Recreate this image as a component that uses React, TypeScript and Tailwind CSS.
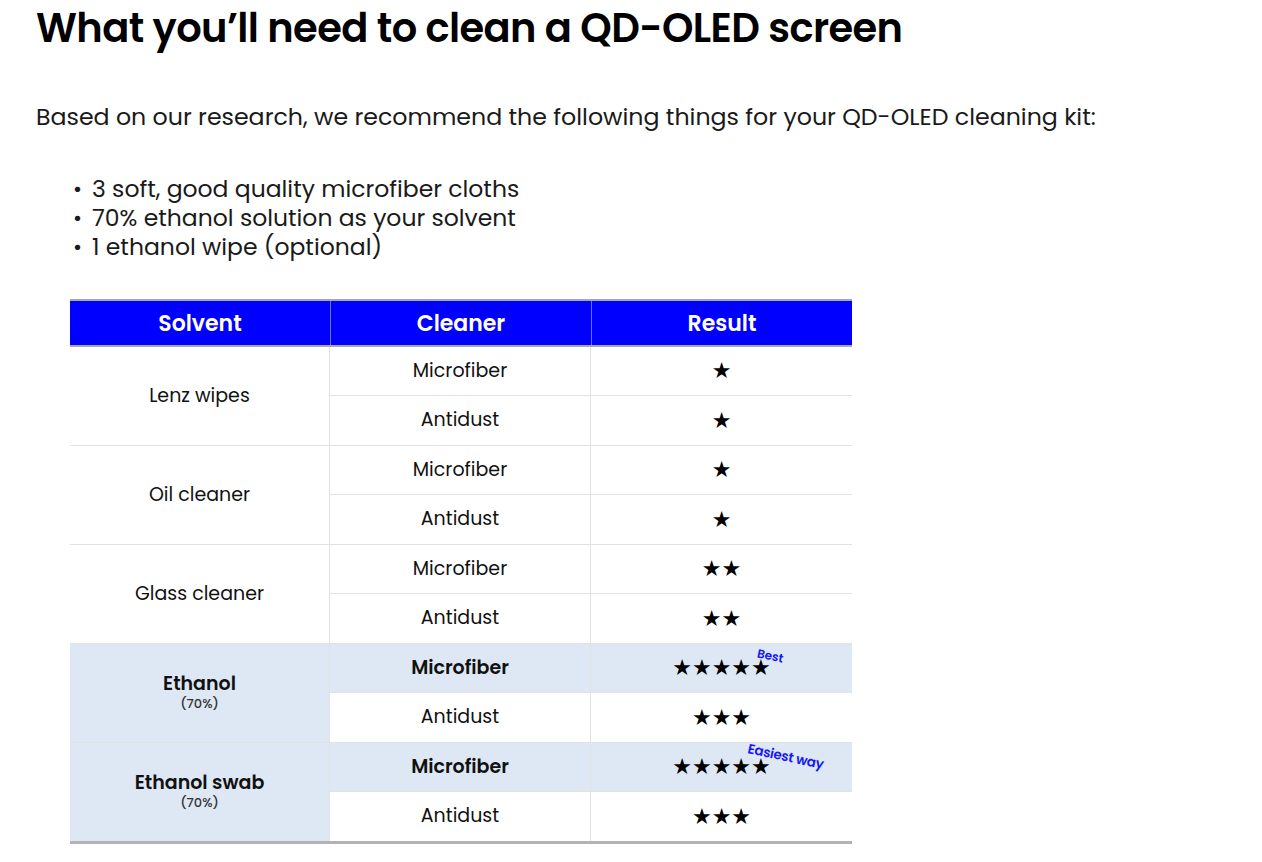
const rows = [
  { solvent: "Lenz wipes", sub: "", hl: false, items: [{ cleaner: "Microfiber", stars: "★", note: "" }, { cleaner: "Antidust", stars: "★", note: "" }] },
  { solvent: "Oil cleaner", sub: "", hl: false, items: [{ cleaner: "Microfiber", stars: "★", note: "" }, { cleaner: "Antidust", stars: "★", note: "" }] },
  { solvent: "Glass cleaner", sub: "", hl: false, items: [{ cleaner: "Microfiber", stars: "★★", note: "" }, { cleaner: "Antidust", stars: "★★", note: "" }] },
  { solvent: "Ethanol", sub: "(70%)", hl: true, items: [{ cleaner: "Microfiber", stars: "★★★★★", note: "Best" }, { cleaner: "Antidust", stars: "★★★", note: "" }] },
  { solvent: "Ethanol swab", sub: "(70%)", hl: true, items: [{ cleaner: "Microfiber", stars: "★★★★★", note: "Easiest way" }, { cleaner: "Antidust", stars: "★★★", note: "" }] },
];

const items = ["3 soft, good quality microfiber cloths", "70% ethanol solution as your solvent", "1 ethanol wipe (optional)"];

export default function App() {
  return (
    <div className="min-h-screen bg-white pl-[36px] text-[#111] font-['Poppins','Lato','Noto_Sans',sans-serif]">
      <h1 className="pt-[2px] text-[40px] font-semibold leading-[52px] tracking-[-0.6px] text-black">
        What you’ll need to clean a QD-OLED screen
      </h1>
      <p className="mt-[48px] text-[23.7px] leading-[30px] text-[#1a1a1a]">
        Based on our research, we recommend the following things for your QD-OLED cleaning kit:
      </p>
      <ul className="mt-[42px] pl-[36px] text-[23.5px] leading-[29px] text-[#1a1a1a]">
        {items.map((t) => (
          <li key={t} className="flex items-center">
            <span className="w-[20px] pl-[1px] text-[18px] font-bold">•</span>
            <span>{t}</span>
          </li>
        ))}
      </ul>

      <div className="mt-[38px] ml-[34px] w-[782px]">
        <div className="grid grid-cols-[260px_261px_261px] border-t-2 border-b-2 border-[#a8a8a8] bg-[#0000ff] text-[22px] font-semibold text-white">
          <div className="flex h-[44px] items-center justify-center">Solvent</div>
          <div className="flex h-[44px] items-center justify-center border-l border-[#6f6fff]">Cleaner</div>
          <div className="flex h-[44px] items-center justify-center border-l border-[#6f6fff]">Result</div>
        </div>
        <div className="border-b-[3px] border-[#b3b3b3]">
          {rows.map((g, gi) => (
            <div
              key={g.solvent}
              className={`grid grid-cols-[260px_522px] ${gi < rows.length - 1 ? "border-b border-[#e2e2e2]" : ""}`}
            >
              <div className={`flex flex-col items-center justify-center border-r border-[#e2e2e2] ${g.hl ? "bg-[#dde8f4] font-semibold" : ""}`}>
                <span className="text-[19px] leading-[22px]">{g.solvent}</span>
                {g.sub && <span className="text-[13px] leading-[18px] font-medium text-[#333]">{g.sub}</span>}
              </div>
              <div>
                {g.items.map((it, i) => {
                  const shade = g.hl && i === 0;
                  return (
                    <div
                      key={it.cleaner}
                      className={`grid h-[49px] grid-cols-[261px_261px] ${i === 0 ? "border-b border-[#e2e2e2]" : ""} ${shade ? "bg-[#dde8f4] font-semibold" : ""}`}
                    >
                      <div className="flex items-center justify-center border-r border-[#e2e2e2] text-[19px]">{it.cleaner}</div>
                      <div className="relative flex items-center justify-center font-['DejaVu_Sans',sans-serif] text-[22px] text-black">
                        <span className="leading-none">{it.stars}</span>
                        {it.note === "Best" && (
                          <span className="absolute left-[166px] top-[3px] rotate-[12deg] font-['Poppins',sans-serif] text-[12px] font-semibold text-[#1515ff]">
                            Best
                          </span>
                        )}
                        {it.note === "Easiest way" && (
                          <span className="absolute left-[156px] top-[4px] rotate-[12deg] font-['Poppins',sans-serif] text-[13.5px] font-semibold tracking-[-0.3px] text-[#1515ff]">
                            Easiest way
                          </span>
                        )}
                      </div>
                    </div>
                  );
                })}
              </div>
            </div>
          ))}
        </div>
      </div>
    </div>
  );
}
